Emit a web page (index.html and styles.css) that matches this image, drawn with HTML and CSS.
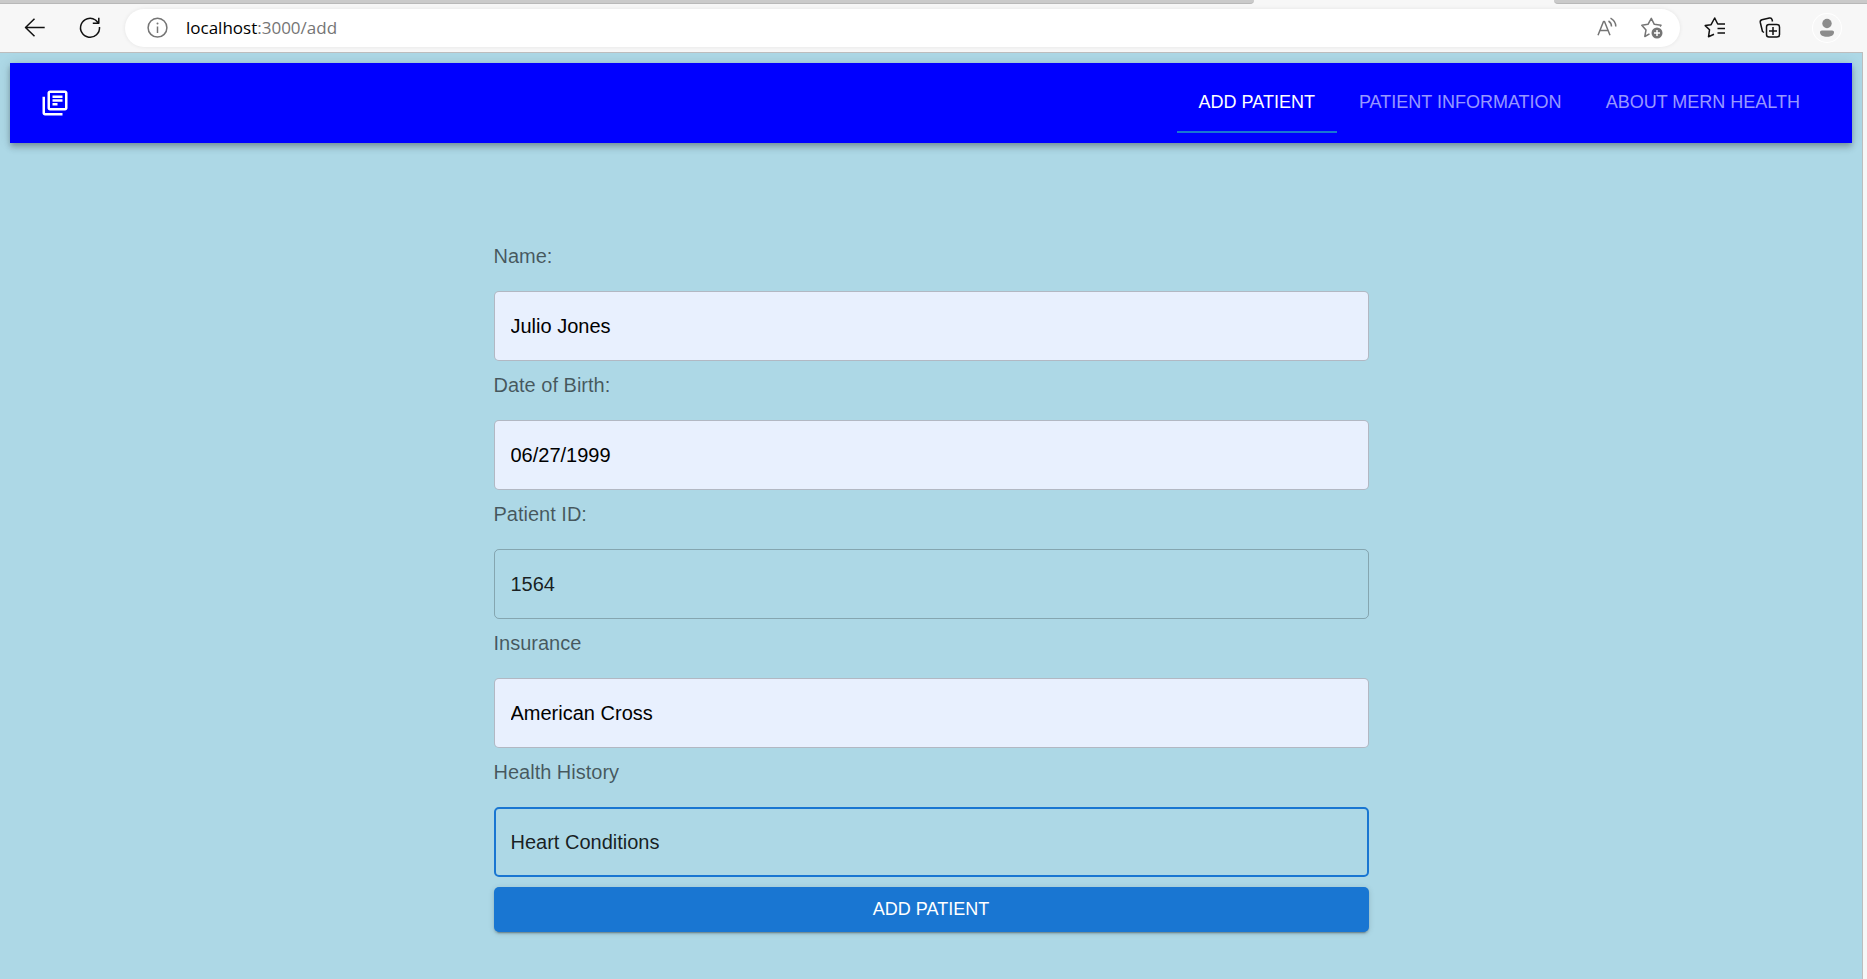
FILE: index.html
```html
<!DOCTYPE html>
<html lang="en">
<head>
<meta charset="utf-8">
<title>MERN Health</title>
<link rel="stylesheet" href="styles.css">
</head>
<body>
<div class="browser">
  <div class="tab-strip">
    <div class="strip-left"></div>
    <div class="strip-active"></div>
    <div class="strip-right"></div>
  </div>
  <div class="toolbar">
    <div class="tool-group">
      <button class="tool" type="button" aria-label="Back">
        <svg viewBox="0 0 24 24"><path d="M21.700 11.500H2.500M11.500 2.700l-9 8.800 9 8.800"/></svg>
      </button>
      <button class="tool" type="button" aria-label="Refresh">
        <svg viewBox="0 0 24 24"><path d="M21.500 11A9.500 9.500 0 1 1 17.500 4l3 3M20.800 1.800V7.300h-6"/></svg>
      </button>
    </div>
    <div class="address">
      <button class="tool muted" type="button" aria-label="Site information">
        <svg viewBox="0 0 24 24"><circle cx="11.500" cy="11.700" r="9.400"/><path d="M11.500 10.500v6.500"/><circle class="solid" cx="11.500" cy="7.500" r="1"/></svg>
      </button>
      <div class="url" role="textbox" aria-label="Address" contenteditable="true" spellcheck="false">localhost<span class="url-path">:3000/add</span></div>
      <div class="address-actions">
        <button class="tool muted" type="button" aria-label="Read aloud">
          <svg viewBox="0 0 24 24"><path d="M3 19.300L8.500 5.500h1L15 19.300M5 14.500h8M13.500 5c2 1.300 3 3 3 5.500M15.500 2.200c3.500 1.800 5.200 4.500 5.300 8.300"/></svg>
        </button>
        <button class="tool muted" type="button" aria-label="Add to favorites">
          <svg viewBox="0 0 24 24"><path d="M9.500 17.800L4.800 20.500l1.200-6.500L1.800 9.200l6.200-.9L11.300 2.300l3 6 6.700.9-1 1.200"/><circle class="solid" cx="17" cy="17" r="5.500"/><path class="knock" d="M17 14v6M14 17h6"/></svg>
        </button>
      </div>
    </div>
    <div class="tool-group">
      <button class="tool" type="button" aria-label="Favorites">
        <svg viewBox="0 0 24 24"><path d="M11 18.300L5.500 20.800l1-7L2.200 9.600l5.900-.9L11.700 2l3 6H22M14.500 12.500H22M14.500 17H22"/></svg>
      </button>
      <button class="tool" type="button" aria-label="Collections">
        <svg viewBox="0 0 24 24"><path d="M6 16.500l-1.500-1L2.300 6.500c-.3-1.400.3-2.300 1.600-2.700l7.500-1.800c1.400-.3 2.300.3 2.700 1.700l.4 1.800"/><rect x="8.500" y="8.500" width="13" height="12.500" rx="2.500"/><path d="M15 11v8M11 15h8"/></svg>
      </button>
      <button class="profile" type="button" aria-label="Profile">
        <svg viewBox="0 0 28 28"><circle cx="14" cy="9.500" r="4.700"/><path d="M7 18.300c0-1 .8-1.800 1.800-1.800h10.400c1 0 1.800.8 1.800 1.800 0 3-3 4.500-7 4.500s-7-1.500-7-4.500z"/></svg>
      </button>
    </div>
  </div>
  <div class="page">
    <header class="app-bar">
      <a class="logo" href="#" aria-label="Home">
        <svg viewBox="0 0 24 24"><path d="M4 7H2v13c0 1.100.9 2 2 2h14v-2H4V7z"/><path d="M20 2H8c-1.100 0-2 .9-2 2v12c0 1.100.9 2 2 2h12c1.100 0 2-.9 2-2V4c0-1.100-.9-2-2-2zm0 14H8V4h12v12zM10 9h8v2h-8zm0 3h4v2h-4zm0-6h8v2h-8z"/></svg>
      </a>
      <nav class="tabs">
        <a class="tab selected" href="#" aria-current="page">ADD PATIENT</a>
        <a class="tab" href="#">PATIENT INFORMATION</a>
        <a class="tab" href="#">ABOUT MERN HEALTH</a>
      </nav>
    </header>
    <form class="patient-form">
      <div class="field">
        <label for="name">Name:</label>
        <input class="filled" id="name" type="text" value="Julio Jones">
      </div>
      <div class="field">
        <label for="dob">Date of Birth:</label>
        <input class="filled" id="dob" type="text" value="06/27/1999">
      </div>
      <div class="field">
        <label for="pid">Patient ID:</label>
        <input id="pid" type="text" value="1564">
      </div>
      <div class="field">
        <label for="insurance">Insurance</label>
        <input class="filled" id="insurance" type="text" value="American Cross">
      </div>
      <div class="field">
        <label for="history">Health History</label>
        <input class="active" id="history" type="text" value="Heart Conditions">
      </div>
      <button class="submit" type="submit">ADD PATIENT</button>
    </form>
  </div>
</div>
</body>
</html>
```

FILE: styles.css
```css
* {
  box-sizing: border-box;
}

body {
  margin: 0;
  background: #f7f7f7;
  font-family: "Liberation Sans", Arial, sans-serif;
}

button {
  border: 0;
  padding: 0;
  background: none;
  font: inherit;
  cursor: pointer;
}

.browser {
  display: flex;
  flex-direction: column;
  min-height: 100vh;
}

/* Browser chrome */
.tab-strip {
  display: flex;
  height: 4px;
}

.strip-left,
.strip-right {
  background: #cacaca;
  border-bottom: 1px solid #b8b8b8;
}

.strip-left {
  flex: 4;
  border-bottom-right-radius: 4px;
}

.strip-active {
  width: 300px;
}

.strip-right {
  flex: 1;
  border-bottom-left-radius: 4px;
}

.toolbar {
  display: flex;
  align-items: center;
  gap: 23px;
  height: 48px;
  padding: 0 26px 0 23px;
}

.tool-group {
  display: flex;
  align-items: center;
  gap: 31px;
}

.tool {
  display: block;
  width: 24px;
  height: 24px;
  color: #111;
}

.tool svg {
  display: block;
  fill: none;
  stroke: currentColor;
  stroke-width: 1.5;
  stroke-linejoin: round;
}

.tool.muted {
  color: #757575;
}

.tool .solid {
  fill: currentColor;
  stroke: none;
}

.tool .knock {
  stroke: #fff;
}

.address {
  display: flex;
  flex: 1;
  align-items: center;
  gap: 16px;
  height: 38px;
  padding: 0 16px 0 21px;
  border-radius: 19px;
  background: #fff;
  box-shadow: 0 0 4px rgba(0, 0, 0, 0.08);
}

.url {
  flex: 1;
  color: #000;
  font-family: "Open Sans", "Noto Sans", sans-serif;
  font-size: 17px;
  line-height: 24px;
  white-space: nowrap;
}

.url-path {
  color: #757575;
}

.address-actions {
  display: flex;
  gap: 21px;
}

.profile {
  width: 28px;
  height: 28px;
  border-radius: 50%;
  background: #f7f7f7;
  box-shadow: 0 0 0 1px #fff;
}

.profile svg {
  display: block;
  fill: #8c8c8c;
}

/* Application page */
.page {
  flex: 1;
  margin-right: 4px;
  padding: 10px;
  border-top: 1px solid #bdbdbd;
  border-right: 1px solid #bdbdbd;
  background: #add8e6;
}

.app-bar {
  display: flex;
  align-items: center;
  justify-content: space-between;
  height: 80px;
  padding: 0 30px;
  background: #00f;
  box-shadow: 0 2px 5px -1px rgba(0, 0, 0, 0.2), 0 5px 6px rgba(0, 0, 0, 0.14), 0 1px 12px rgba(0, 0, 0, 0.12);
}

.logo svg {
  display: block;
  width: 30px;
  height: 30px;
  fill: #fff;
}

.tabs {
  display: flex;
}

.tab {
  height: 60px;
  padding: 0 22px;
  border-bottom: 2px solid transparent;
  color: rgba(255, 255, 255, 0.6);
  font-size: 18px;
  line-height: 58px;
  text-decoration: none;
  white-space: nowrap;
}

.tab.selected {
  border-color: #1976d2;
  color: #fff;
}

.patient-form {
  display: flex;
  flex-direction: column;
  gap: 10px;
  max-width: 875px;
  margin: 99px auto 0;
}

.field {
  display: flex;
  flex-direction: column;
  gap: 20px;
}

.field label {
  color: rgba(0, 0, 0, 0.6);
  font-size: 20px;
  line-height: 29px;
}

.field input {
  width: 100%;
  height: 70px;
  padding: 0 16px;
  border: 1px solid rgba(0, 0, 0, 0.23);
  border-radius: 5px;
  outline: 0;
  background: transparent;
  color: rgba(0, 0, 0, 0.87);
  font-family: inherit;
  font-size: 20px;
}

.field input.filled {
  background: #e8f0fe;
  color: #000;
}

.field input.active,
.field input:focus {
  padding: 0 15px;
  border: 2px solid #1976d2;
}

.submit {
  height: 45px;
  border-radius: 5px;
  background: #1976d2;
  box-shadow: 0 4px 1px -3px rgba(0, 0, 0, 0.2), 0 2px 2px rgba(0, 0, 0, 0.14), 0 1px 6px rgba(0, 0, 0, 0.12);
  color: #fff;
  font-size: 18px;
}
```
